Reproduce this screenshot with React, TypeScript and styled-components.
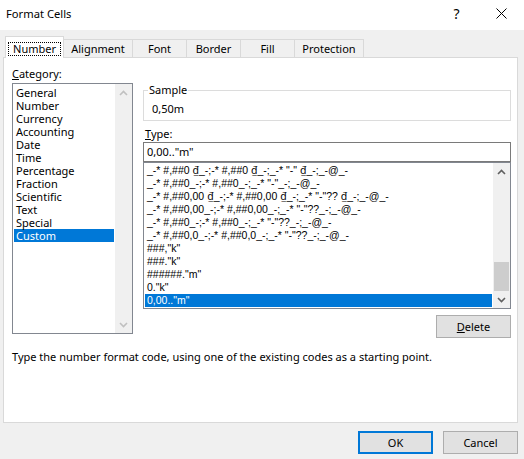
import React from 'react';
import styled, { createGlobalStyle, css } from 'styled-components';

const GlobalStyle = createGlobalStyle`
  html, body {
    margin: 0;
    padding: 0;
    background: #f0f0f0;
  }
  body {
    font-family: "Noto Sans", "Liberation Sans", sans-serif;
    font-size: 11px;
    color: #000;
  }
`;

const categories = [
  'General', 'Number', 'Currency', 'Accounting', 'Date', 'Time',
  'Percentage', 'Fraction', 'Scientific', 'Text', 'Special', 'Custom',
];

const formats = [
  '_-* #,##0 ₫_-;-* #,##0 ₫_-;_-* "-" ₫_-;_-@_-',
  '_-* #,##0_-;-* #,##0_-;_-* "-"_-;_-@_-',
  '_-* #,##0,00 ₫_-;-* #,##0,00 ₫_-;_-* "-"?? ₫_-;_-@_-',
  '_-* #,##0,00_-;-* #,##0,00_-;_-* "-"??_-;_-@_-',
  '_-* #,##0_-;-* #,##0_-;_-* "-"??_-;_-@_-',
  '_-* #,##0,0_-;-* #,##0,0_-;_-* "-"??_-;_-@_-',
  '###,"k"',
  '###."k"',
  '######."m"',
  '0."k"',
  '0,00.."m"',
];

const tabs = [
  { label: 'Number', w: 59 },
  { label: 'Alignment', w: 70 },
  { label: 'Font', w: 55 },
  { label: 'Border', w: 55 },
  { label: 'Fill', w: 55 },
  { label: 'Protection', w: 70 },
];

const Window = styled.div`
  width: 524px;
  height: 459px;
  background: #f0f0f0;
  display: flex;
  flex-direction: column;
  overflow: hidden;
`;

const TitleBar = styled.div`
  height: 30px;
  background: #fff;
  display: flex;
  align-items: center;
  padding-left: 6px;
  flex-shrink: 0;
`;

const Title = styled.div`
  font-size: 11.2px;
  line-height: 16px;
  margin-top: -2px;
`;

const TitleButtons = styled.div`
  margin-left: auto;
  display: flex;
  height: 100%;
`;

const CaptionButton = styled.div`
  width: 45px;
  height: 100%;
  display: flex;
  align-items: center;
  justify-content: center;
  font-size: 14px;
  color: #000;
  margin-top: -2px;
`;

const Content = styled.div`
  padding: 6px 6px 0 3px;
  display: flex;
  flex-direction: column;
`;

const TabRow = styled.div`
  height: 22px;
  display: flex;
  align-items: flex-end;
  padding-left: 2px;
`;

const Tab = styled.div<{ $w: number; $active?: boolean }>`
  box-sizing: border-box;
  width: ${(p) => p.$w}px;
  height: 18px;
  margin-bottom: 1px;
  margin-left: -1px;
  border: 1px solid #d9d9d9;
  border-bottom: none;
  background: #f0f0f0;
  display: flex;
  align-items: center;
  justify-content: center;
  line-height: 14px;
  &:first-child {
    margin-left: 0;
  }
  ${(p) =>
    p.$active &&
    css`
      height: 22px;
      margin-bottom: 0;
      background: #fff;
      position: relative;
      z-index: 1;
      padding-top: 2px;
    `}
`;

const FocusRing = styled.span`
  border: 1px dotted #000;
  padding: 0 4px;
  line-height: 12px;
`;

const Panel = styled.div`
  box-sizing: border-box;
  margin-top: -1px;
  height: 366px;
  background: #fff;
  border: 1px solid #d9d9d9;
  padding: 8px 0 0 8px;
  display: flex;
  flex-direction: column;
`;

const PanelBody = styled.div`
  display: flex;
  gap: 10px;
`;

const LeftColumn = styled.div`
  width: 121px;
  display: flex;
  flex-direction: column;
`;

const RightColumn = styled.div`
  width: 368px;
  display: flex;
  flex-direction: column;
`;

const FieldLabel = styled.div<{ $top?: number }>`
  line-height: 14px;
  margin-top: ${(p) => p.$top ?? 0}px;
  padding-left: 2px;
  u {
    text-decoration: underline;
  }
`;

const CategoryLabel = styled(FieldLabel)`
  line-height: 16px;
  padding-left: 0;
  margin-bottom: 1px;
`;

const ListBox = styled.div<{ $h: number }>`
  box-sizing: border-box;
  height: ${(p) => p.$h}px;
  border: 1px solid #828790;
  background: #fff;
  display: flex;
`;

const Items = styled.div<{ $padTop: number }>`
  flex: 1;
  min-width: 0;
  padding: ${(p) => p.$padTop}px 1px 0 1px;
  overflow: hidden;
`;

const Item = styled.div<{ $selected?: boolean; $code?: boolean }>`
  height: 13px;
  line-height: 13px;
  padding-left: 2px;
  white-space: nowrap;
  ${(p) =>
    p.$code &&
    css`
      font-family: "Liberation Sans", Arial, sans-serif;
      font-size: 10.5px;
      overflow: hidden;
    `}
  ${(p) =>
    p.$selected &&
    css`
      background: #0078d7;
      color: #fff;
    `}
`;

const Dong = styled.span`
  font-family: "Noto Sans", "DejaVu Sans", sans-serif;
  font-size: 10.5px;
`;

const ScrollBar = styled.div`
  width: 17px;
  background: #f0f0f0;
  display: flex;
  flex-direction: column;
  flex-shrink: 0;
`;

const ArrowBox = styled.div`
  height: 17px;
  display: flex;
  align-items: center;
  justify-content: center;
  flex-shrink: 0;
`;

const Track = styled.div`
  flex: 1;
  display: flex;
  flex-direction: column;
  justify-content: flex-end;
  align-items: center;
`;

const Thumb = styled.div`
  width: 15px;
  height: 29px;
  background: #cdcdcd;
`;

const SampleGroup = styled.fieldset`
  margin: 17px 0 0 0;
  padding: 0 4px 4px 4px;
  border: 1px solid #dcdcdc;
  min-inline-size: 0;
`;

const Legend = styled.legend`
  padding: 0 1px;
  line-height: 14px;
  color: #000;
`;

const SampleValue = styled.div`
  margin: 5px 0 0 4px;
  line-height: 14px;
`;

const TypeInput = styled.div`
  box-sizing: border-box;
  height: 20px;
  margin-top: 1px;
  border: 1px solid #7a7a7a;
  padding-left: 3px;
  line-height: 18px;
  background: #fff;
`;

const Button = styled.div<{ $default?: boolean }>`
  box-sizing: border-box;
  width: 75px;
  height: 23px;
  background: #e1e1e1;
  border: 1px solid #adadad;
  display: flex;
  align-items: center;
  justify-content: center;
  line-height: 14px;
  ${(p) =>
    p.$default &&
    css`
      border-color: #0078d7;
      box-shadow: inset 0 0 0 1px #0078d7;
    `}
`;

const DeleteButton = styled(Button)`
  align-self: flex-end;
  margin-top: 6px;
`;

const Description = styled.div`
  margin-top: 12px;
  line-height: 14px;
`;

const Footer = styled.div`
  display: flex;
  justify-content: flex-end;
  gap: 10px;
  margin-top: 8px;
`;

const Chevron = ({ up, color }: { up?: boolean; color: string }) => (
  <svg width="9" height="6" viewBox="0 0 9 6">
    <polyline
      points={up ? '1,5 4.5,1.5 8,5' : '1,1 4.5,4.5 8,1'}
      fill="none"
      stroke={color}
      strokeWidth="1.6"
    />
  </svg>
);

const CloseIcon = () => (
  <svg width="11" height="11" viewBox="0 0 11 11">
    <path d="M0.5 0.5 L10.5 10.5 M10.5 0.5 L0.5 10.5" stroke="#000" strokeWidth="1" />
  </svg>
);

// split a format code so the dong sign can take a font that draws it full size
const renderCode = (code: string) =>
  code.split('₫').map((part, i, arr) => (
    <React.Fragment key={i}>
      {part}
      {i < arr.length - 1 && <Dong>₫</Dong>}
    </React.Fragment>
  ));

const App = () => {
  return (
    <>
      <GlobalStyle />
      <Window>
        <TitleBar>
          <Title>Format Cells</Title>
          <TitleButtons>
            <CaptionButton>?</CaptionButton>
            <CaptionButton>
              <CloseIcon />
            </CaptionButton>
          </TitleButtons>
        </TitleBar>
        <Content>
          <TabRow>
            {tabs.map((t, i) => (
              <Tab key={t.label} $w={t.w} $active={i === 0}>
                {i === 0 ? <FocusRing>{t.label}</FocusRing> : t.label}
              </Tab>
            ))}
          </TabRow>
          <Panel>
            <PanelBody>
              <LeftColumn>
                <CategoryLabel>
                  <u>C</u>ategory:
                </CategoryLabel>
                <ListBox $h={251}>
                  <Items $padTop={2}>
                    {categories.map((c) => (
                      <Item key={c} $selected={c === 'Custom'}>
                        {c}
                      </Item>
                    ))}
                  </Items>
                  <ScrollBar>
                    <ArrowBox>
                      <Chevron up color="#c0c0c0" />
                    </ArrowBox>
                    <Track />
                    <ArrowBox>
                      <Chevron color="#c0c0c0" />
                    </ArrowBox>
                  </ScrollBar>
                </ListBox>
              </LeftColumn>
              <RightColumn>
                <SampleGroup>
                  <Legend>Sample</Legend>
                  <SampleValue>0,50m</SampleValue>
                </SampleGroup>
                <FieldLabel $top={6}>
                  <u>T</u>ype:
                </FieldLabel>
                <TypeInput>0,00.."m"</TypeInput>
                <ListBox $h={147}>
                  <Items $padTop={1}>
                    {formats.map((f, i) => (
                      <Item key={f} $code $selected={i === formats.length - 1}>
                        {renderCode(f)}
                      </Item>
                    ))}
                  </Items>
                  <ScrollBar>
                    <ArrowBox>
                      <Chevron up color="#606060" />
                    </ArrowBox>
                    <Track>
                      <Thumb />
                    </Track>
                    <ArrowBox>
                      <Chevron color="#606060" />
                    </ArrowBox>
                  </ScrollBar>
                </ListBox>
                <DeleteButton>
                  <span>
                    <u>D</u>elete
                  </span>
                </DeleteButton>
              </RightColumn>
            </PanelBody>
            <Description>
              Type the number format code, using one of the existing codes as a starting point.
            </Description>
          </Panel>
          <Footer>
            <Button $default>OK</Button>
            <Button>Cancel</Button>
          </Footer>
        </Content>
      </Window>
    </>
  );
};

export default App;
